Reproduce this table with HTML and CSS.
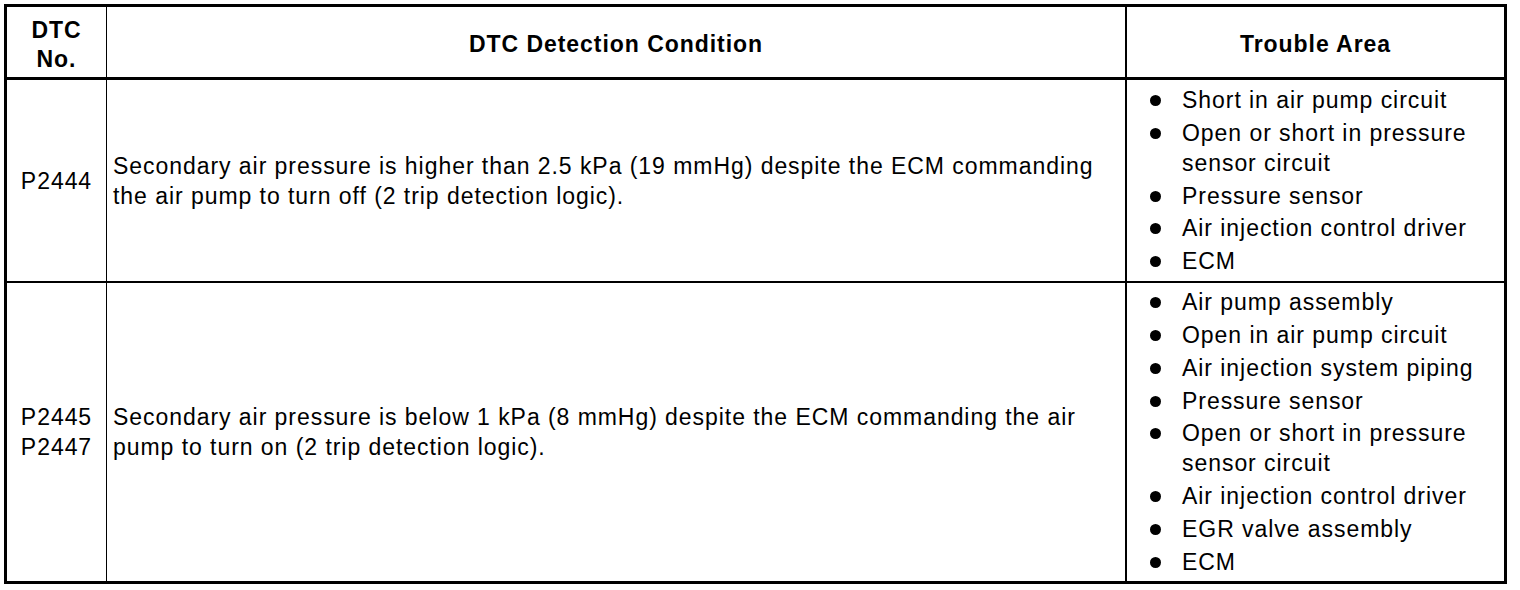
FILE: index.html
```html
<!DOCTYPE html>
<html>
<head>
<meta charset="utf-8">
<link rel="stylesheet" href="styles.css">
</head>
<body>
<table class="dtc">
  <colgroup>
    <col class="c1"><col class="c2"><col class="c3">
  </colgroup>
  <thead>
    <tr class="head">
      <th class="no">DTC<br>No.</th>
      <th class="cond">DTC Detection Condition</th>
      <th class="area">Trouble Area</th>
    </tr>
  </thead>
  <tbody>
    <tr class="r1">
      <td class="no">P2444</td>
      <td class="cond">Secondary air pressure is higher than 2.5 kPa (19 mmHg) despite the ECM commanding<br>the air pump to turn off (2 trip detection logic).</td>
      <td class="area">
        <ul class="list">
          <li>Short in air pump circuit</li>
          <li>Open or short in pressure<br>sensor circuit</li>
          <li>Pressure sensor</li>
          <li>Air injection control driver</li>
          <li>ECM</li>
        </ul>
      </td>
    </tr>
    <tr class="r2">
      <td class="no">P2445<br>P2447</td>
      <td class="cond">Secondary air pressure is below 1 kPa (8 mmHg) despite the ECM commanding the air<br>pump to turn on (2 trip detection logic).</td>
      <td class="area">
        <ul class="list">
          <li>Air pump assembly</li>
          <li>Open in air pump circuit</li>
          <li>Air injection system piping</li>
          <li>Pressure sensor</li>
          <li>Open or short in pressure<br>sensor circuit</li>
          <li>Air injection control driver</li>
          <li>EGR valve assembly</li>
          <li>ECM</li>
        </ul>
      </td>
    </tr>
  </tbody>
</table>
</body>
</html>
```
FILE: styles.css
```css
html, body {
  margin: 0;
  padding: 0;
  background: #fff;
}
body {
  padding: 4px 0 0 4px;
  font-family: "Liberation Sans", Arial, sans-serif;
  color: #000;
}
.dtc {
  border-collapse: separate;
  border-spacing: 0;
  border: 3px solid #000;
  table-layout: fixed;
  width: 1503px;
  font-size: 23px;
  letter-spacing: 0.95px;
}
.c1 { width: 100px; }
.c2 { width: 1020px; }
.c3 { width: 377px; }
.dtc th, .dtc td {
  padding: 0;
  vertical-align: middle;
  line-height: 30px;
}
.dtc th.no, .dtc td.no { border-right: 1px solid #000; text-align: center; }
.dtc th.cond, .dtc td.cond { border-right: 2px solid #000; }
.head th {
  height: 66px;
  padding-top: 4px;
  font-weight: bold;
  text-align: center;
  border-bottom: 3px solid #000;
  line-height: 29px;
}
.head th.no { padding-top: 6px; height: 64px; }
.r1 td { height: 201px; border-bottom: 2px solid #000; }
.r2 td { height: 298px; }
td.cond { padding-left: 6px; }
.list {
  list-style: none;
  margin: 0;
  padding: 0 0 0 55px;
}
.list li {
  position: relative;
  margin-top: 2.8px;
}
.list li:first-child { margin-top: 0; }
.list li::before {
  content: "";
  position: absolute;
  left: -32px;
  top: 10px;
  width: 11px;
  height: 11px;
  border-radius: 50%;
  background: #000;
}
```
